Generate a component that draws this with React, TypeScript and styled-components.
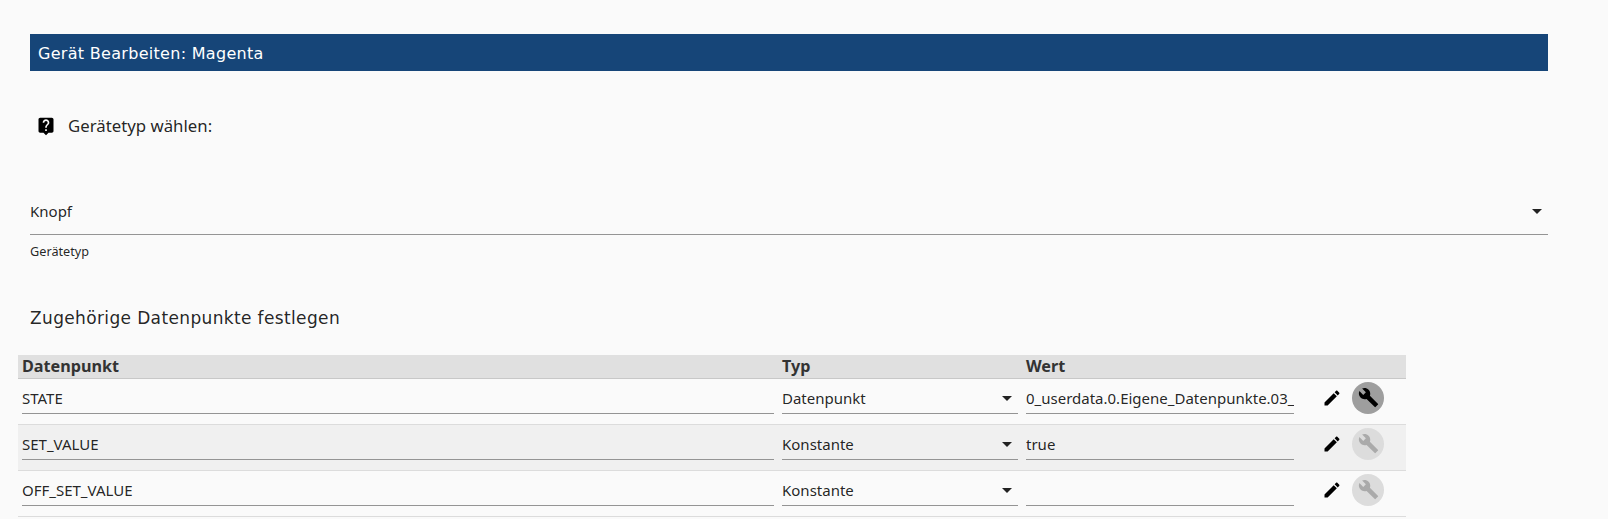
import React from 'react';
import styled, { createGlobalStyle } from 'styled-components';

const GlobalStyle = createGlobalStyle`
  html, body {
    margin: 0;
    padding: 0;
    background: #fafafa;
    color: rgba(0, 0, 0, 0.87);
    font-family: 'Noto Sans', 'Open Sans', sans-serif;
    overflow: hidden;
  }
`;

const Page = styled.div`
  display: flex;
  flex-direction: column;
  width: 1608px;
  height: 519px;
  padding-top: 34px;
  box-sizing: border-box;
`;

const Banner = styled.h1`
  box-sizing: border-box;
  margin: 0 60px 0 30px;
  height: 37px;
  padding: 2px 0 0 8px;
  background: #164578;
  color: #fff;
  font-family: 'DejaVu Sans', sans-serif;
  font-size: 16px;
  font-weight: 400;
  line-height: 35px;
  letter-spacing: 0.3px;
`;

const HelpRow = styled.div`
  display: flex;
  align-items: center;
  gap: 12px;
  height: 24px;
  margin: 43px 0 0 36px;
`;

const HelpLabel = styled.span`
  margin-bottom: 2px;
  font-size: 16.8px;
`;

const HelpIcon = styled.svg`
  width: 20px;
  height: 20px;
  fill: #000;
`;

const SelectBlock = styled.div`
  margin: 54px 60px 0 30px;
`;

const SelectBox = styled.div`
  display: flex;
  align-items: center;
  justify-content: space-between;
  box-sizing: border-box;
  height: 43px;
  padding-bottom: 4px;
  border-bottom: 1px solid #949494;
  font-size: 15px;
`;

const Caption = styled.div`
  margin-top: 8px;
  font-size: 12.7px;
  line-height: 16px;
`;

const SectionTitle = styled.h2`
  margin: 47px 0 0 30px;
  font-family: 'DejaVu Sans', sans-serif;
  font-size: 17px;
  font-weight: 400;
  line-height: 24px;
  letter-spacing: 0.36px;
`;

const Table = styled.div`
  width: 1388px;
  margin: 25px 0 0 18px;
`;

const HeaderRow = styled.div`
  display: grid;
  grid-template-columns: 760px 244px 276px 108px;
  box-sizing: border-box;
  height: 24px;
  background: #e0e0e0;
  border-bottom: 1px solid #c8c8c8;
`;

const HeaderCell = styled.div`
  padding-left: 4px;
  font-size: 16.2px;
  font-weight: 700;
  line-height: 23px;
  color: #333;
`;

const Row = styled.div<{ $shaded?: boolean }>`
  display: grid;
  grid-template-columns: 760px 244px 276px 108px;
  box-sizing: border-box;
  height: 46px;
  background: ${({ $shaded }) => ($shaded ? '#f0f0f0' : 'transparent')};
  border-bottom: 1px solid #dcdcdc;
`;

const Cell = styled.div`
  padding: 0 4px;
  min-width: 0;
`;

const Field = styled.div`
  display: flex;
  align-items: center;
  justify-content: space-between;
  box-sizing: border-box;
  height: 35px;
  padding-top: 4px;
  overflow: hidden;
  white-space: nowrap;
  border-bottom: 1px solid #949494;
  font-size: 15px;
`;

const Caret = styled.span`
  flex: none;
  width: 0;
  height: 0;
  margin-right: 6px;
  border-left: 5.5px solid transparent;
  border-right: 5.5px solid transparent;
  border-top: 5.5px solid #222;
`;

const Actions = styled.div`
  display: flex;
  align-items: center;
  height: 37px;
  padding-left: 24px;
  gap: 10px;
`;

const PencilIcon = styled.svg`
  width: 20px;
  height: 20px;
  fill: #000;
`;

const WrenchButton = styled.div<{ $disabled?: boolean }>`
  display: flex;
  align-items: center;
  justify-content: center;
  width: 32px;
  height: 32px;
  border-radius: 50%;
  background: ${({ $disabled }) => ($disabled ? '#dcdcdc' : '#9e9e9e')};

  svg {
    width: 21px;
    height: 21px;
    fill: ${({ $disabled }) => ($disabled ? '#aaaaaa' : '#000')};
  }
`;

interface DataPoint {
  name: string;
  type: string;
  value: string;
  active?: boolean;
}

const points: DataPoint[] = [
  { name: 'STATE', type: 'Datenpunkt', value: '0_userdata.0.Eigene_Datenpunkte.03_Wohnzimmer', active: true },
  { name: 'SET_VALUE', type: 'Konstante', value: 'true' },
  { name: 'OFF_SET_VALUE', type: 'Konstante', value: '' },
];

const App = () => {
  return (
    <Page>
      <GlobalStyle />
      <Banner>Gerät Bearbeiten: Magenta</Banner>
      <HelpRow>
        <HelpIcon viewBox="0 0 24 24">
          <path d="M19 2H5c-1.11 0-2 .9-2 2v14c0 1.1.89 2 2 2h4l3 3 3-3h4c1.1 0 2-.9 2-2V4c0-1.1-.9-2-2-2zm-6 16h-2v-2h2v2zm2.07-7.75l-.9.92C13.45 11.9 13 12.5 13 14h-2v-.5c0-1.1.45-2.1 1.17-2.83l1.24-1.26c.37-.36.59-.86.59-1.41 0-1.1-.9-2-2-2s-2 .9-2 2H8c0-2.21 1.79-4 4-4s4 1.79 4 4c0 .88-.36 1.68-.93 2.25z" />
        </HelpIcon>
        <HelpLabel>Gerätetyp wählen:</HelpLabel>
      </HelpRow>
      <SelectBlock>
        <SelectBox>
          Knopf
          <Caret />
        </SelectBox>
        <Caption>Gerätetyp</Caption>
      </SelectBlock>
      <SectionTitle>Zugehörige Datenpunkte festlegen</SectionTitle>
      <Table>
        <HeaderRow>
          <HeaderCell>Datenpunkt</HeaderCell>
          <HeaderCell>Typ</HeaderCell>
          <HeaderCell>Wert</HeaderCell>
          <HeaderCell />
        </HeaderRow>
        {points.map((point, index) => (
          <Row key={point.name} $shaded={index % 2 === 1}>
            <Cell>
              <Field>{point.name}</Field>
            </Cell>
            <Cell>
              <Field>
                {point.type}
                <Caret />
              </Field>
            </Cell>
            <Cell>
              <Field>{point.value}</Field>
            </Cell>
            <Actions>
              <PencilIcon viewBox="0 0 24 24">
                <path d="M3 17.25V21h3.75L17.81 9.94l-3.75-3.75L3 17.25zM20.71 7.04c.39-.39.39-1.02 0-1.41l-2.34-2.34c-.39-.39-1.02-.39-1.41 0l-1.83 1.83 3.75 3.75 1.83-1.83z" />
              </PencilIcon>
              <WrenchButton $disabled={!point.active}>
                <svg viewBox="0 0 24 24">
                  <path d="M22.7 19l-9.1-9.1c.9-2.3.4-5-1.5-6.9-2-2-5-2.4-7.4-1.3L9 6 6 9 1.6 4.7C.4 7.1.9 10.1 2.9 12.1c1.9 1.9 4.6 2.4 6.9 1.5l9.1 9.1c.4.4 1 .4 1.4 0l2.3-2.3c.5-.4.5-1.1.1-1.4z" />
                </svg>
              </WrenchButton>
            </Actions>
          </Row>
        ))}
      </Table>
    </Page>
  );
};

export default App;
